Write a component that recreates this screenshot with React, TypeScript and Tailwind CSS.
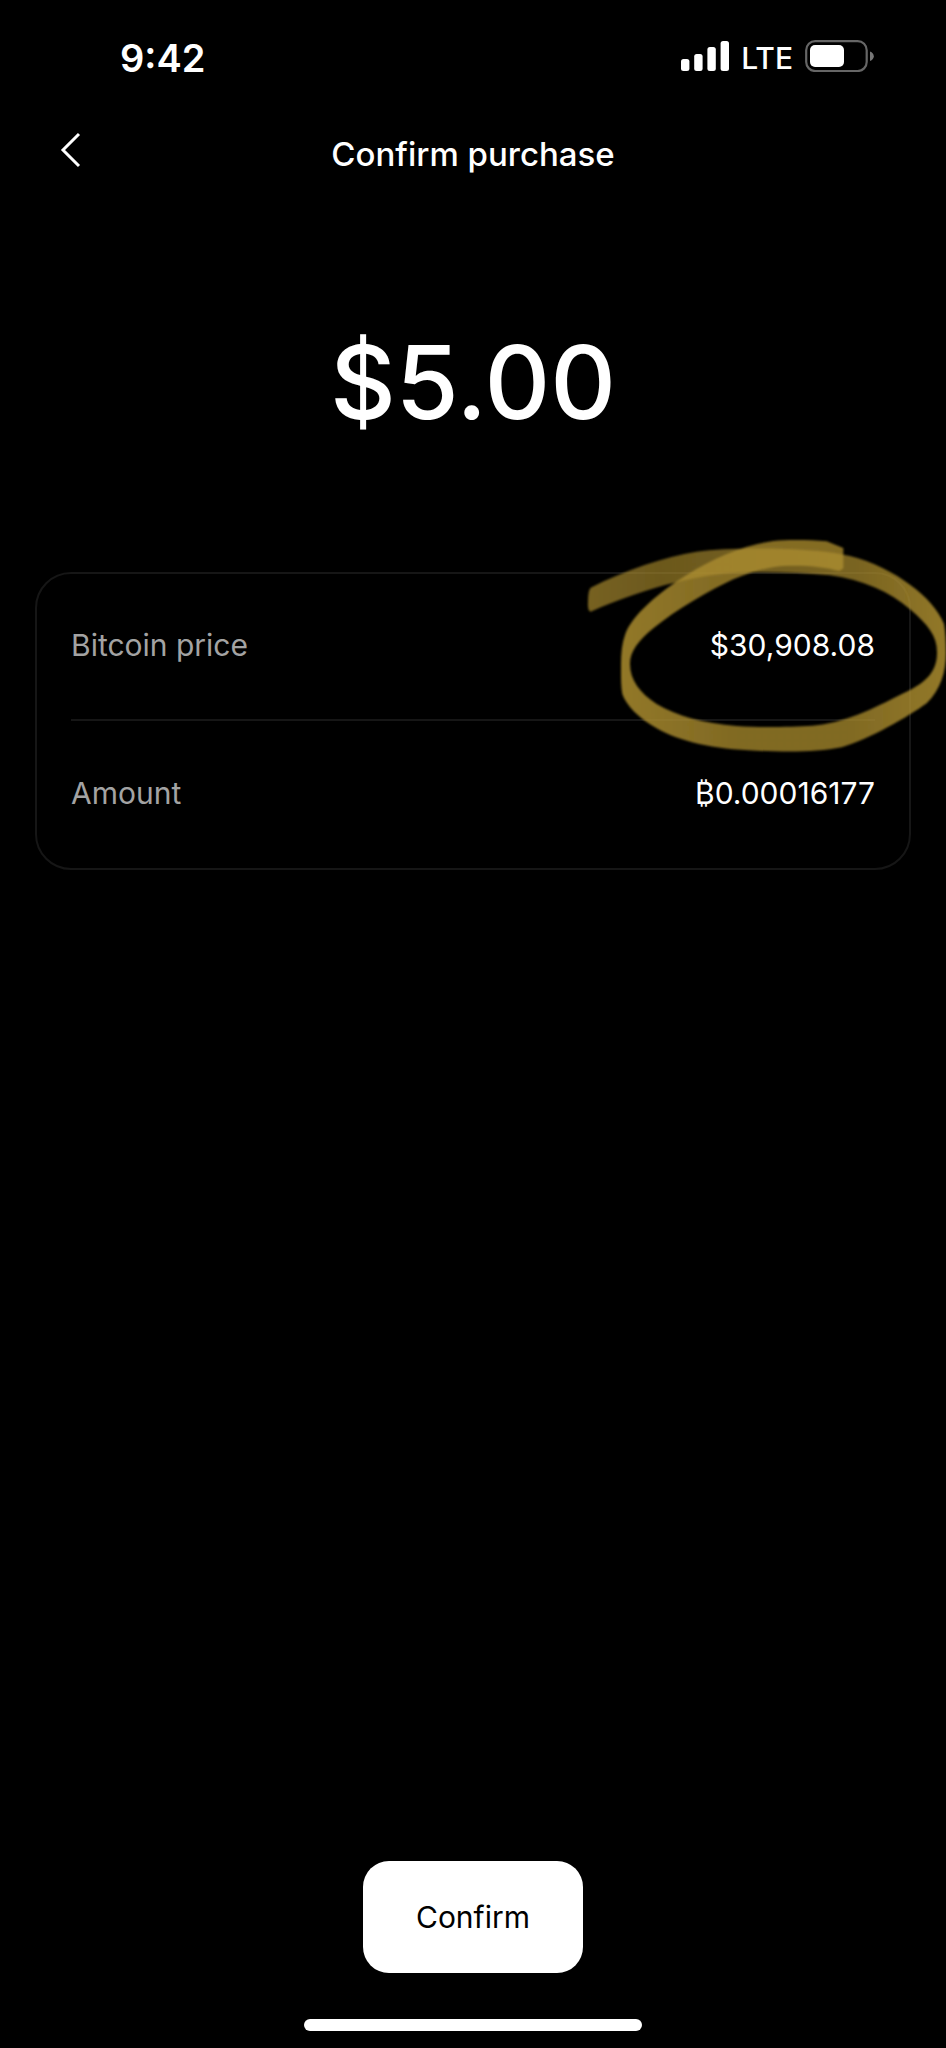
import React from 'react'

const details = [
  { label: 'Bitcoin price', value: '$30,908.08' },
  { label: 'Amount', value: '₿0.00016177' },
]

const SignalIcon = () => (
  <svg className="h-8 w-12" viewBox="0 0 48 32" fill="currentColor" aria-hidden="true">
    <rect x="0" y="19" width="8.400" height="12" rx="2.500" />
    <rect x="13.200" y="14" width="8.400" height="17" rx="2.500" />
    <rect x="26.400" y="7" width="8.400" height="24" rx="2.500" />
    <rect x="39.600" y="1" width="8.400" height="30" rx="2.500" />
  </svg>
)

const BatteryIcon = () => (
  <svg className="h-8 w-[70px]" viewBox="0 0 70 32" aria-hidden="true">
    <rect x="1.200" y="1.200" width="60.500" height="29.800" rx="9" fill="none" stroke="#666" strokeWidth="2.200" />
    <rect x="5" y="5" width="34" height="22" rx="5" fill="#fff" />
    <path d="M65 11.500c2.400 1 3.800 2.600 3.800 4.800s-1.400 3.800-3.800 4.800z" fill="#777" />
  </svg>
)

// one continuous pen stroke in three pieces, it gets brighter where it overlaps itself
const MarkerCircle = () => (
  <svg
    className="pointer-events-none absolute -top-[54px] -right-[37px] h-[250px] w-[376px]"
    viewBox="0 0 1128 750"
    aria-hidden="true"
  >
    <defs>
      <linearGradient id="marker-top" gradientUnits="userSpaceOnUse" x1="60" y1="0" x2="1128" y2="0">
        <stop offset="0" stopColor="#ae8f2f" stopOpacity="0.68" />
        <stop offset="0.2" stopColor="#ae8f2f" stopOpacity="0.62" />
        <stop offset="0.75" stopColor="#ae8f2f" stopOpacity="0.7" />
        <stop offset="1" stopColor="#ae8f2f" stopOpacity="0.84" />
      </linearGradient>
      <linearGradient id="marker-bottom" gradientUnits="userSpaceOnUse" x1="153" y1="0" x2="1128" y2="0">
        <stop offset="0" stopColor="#ae8f2f" stopOpacity="0.84" />
        <stop offset="0.35" stopColor="#ae8f2f" stopOpacity="0.74" />
        <stop offset="0.7" stopColor="#ae8f2f" stopOpacity="0.74" />
        <stop offset="1" stopColor="#ae8f2f" stopOpacity="0.84" />
      </linearGradient>
      <linearGradient id="marker-left" gradientUnits="userSpaceOnUse" x1="153" y1="0" x2="820" y2="0">
        <stop offset="0" stopColor="#ae8f2f" stopOpacity="0.84" />
        <stop offset="0.4" stopColor="#ae8f2f" stopOpacity="0.76" />
        <stop offset="1" stopColor="#ae8f2f" stopOpacity="0.76" />
      </linearGradient>
      <filter id="marker-soft">
        <feGaussianBlur stdDeviation="2.500" />
      </filter>
    </defs>
    <g filter="url(#marker-soft)">
      <path
        fill="url(#marker-top)"
        d="M62 203C165 150 285 110 380 95C460 84 600 83 700 90C760 93 800 99 840 108C905 123 975 160 1020 194C1070 230 1105 270 1122 312Q1128 345 1128 399H1101C1102 350 1075 315 1020 268C960 215 880 180 780 166C700 158 620 156 540 157C400 158 235 200 62 275Q52 272 54 245Q54 212 62 203Z"
      />
      <path
        fill="url(#marker-bottom)"
        d="M1128 399C1128 455 1112 508 1070 550C1015 590 900 657 815 682C740 698 640 696 560 692C430 688 330 665 260 625C205 594 168 555 157 522C152 495 153 460 153 432H180C180 480 210 520 260 552C320 588 400 610 500 618C580 623 680 622 740 616C840 605 930 555 1000 520C1055 493 1101 465 1101 399Z"
      />
      <path
        fill="url(#marker-left)"
        d="M153 432C153 400 156 370 165 345C185 285 270 215 350 165C430 115 520 75 610 63C660 58 720 60 770 64L820 84V145L808 153C770 142 720 136 660 137C600 137 545 155 490 178C420 210 320 268 250 325C205 362 180 395 180 432Z"
      />
    </g>
  </svg>
)

const App = () => {
  return (
    <div className="flex min-h-screen flex-col bg-black font-['Inter',sans-serif] text-white">
      <div className="flex h-28 items-center justify-between pr-[71px] pl-[120px]">
        <div className="pt-1 text-[38px] leading-10 font-semibold">9:42</div>
        <div className="flex items-center gap-3">
          <SignalIcon />
          <span className="pt-1 text-[30px] leading-8 font-medium">LTE</span>
          <BatteryIcon />
        </div>
      </div>

      <header className="grid h-20 grid-cols-[1fr_auto_1fr] items-center px-14">
        <button type="button" aria-label="Back" className="flex h-14 w-14 items-center pb-1">
          <svg className="h-9 w-7" viewBox="0 0 28 36" fill="none" stroke="currentColor" strokeWidth="3" aria-hidden="true">
            <path d="M23 2L7 18l16 16" />
          </svg>
        </button>
        <h1 className="pt-1 text-[33px] leading-10 font-medium">Confirm purchase</h1>
      </header>

      <main className="flex flex-1 flex-col px-[35px]">
        <div className="flex h-[380px] items-center justify-center text-[102px] leading-none font-medium">$5.00</div>

        <section className="relative rounded-[36px] border-2 border-[#161616] px-[34px]">
          <dl className="divide-y-2 divide-[#161616]">
            {details.map((item) => (
              <div key={item.label} className="flex h-[147px] items-center justify-between pb-1 text-[30px] leading-10">
                <dt className="text-[#a3a3a3]">{item.label}</dt>
                <dd>{item.value}</dd>
              </div>
            ))}
          </dl>
          <MarkerCircle />
        </section>
      </main>

      <footer className="flex flex-col items-center pb-[17px]">
        <button type="button" className="h-28 rounded-[26px] bg-white px-[53px] text-[30px] text-black">
          Confirm
        </button>
        <div className="mt-[46px] h-3 w-[338px] rounded-full bg-white" />
      </footer>
    </div>
  )
}

export default App
